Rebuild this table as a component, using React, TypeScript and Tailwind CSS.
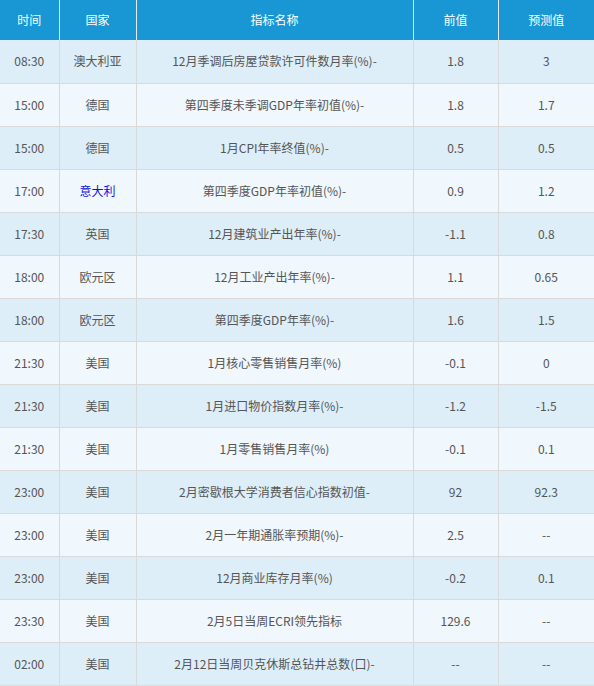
import React from 'react';

type Row = { time: string; country: string; name: string; prev: string; fcst: string; link?: boolean };

const rows: Row[] = [
  { time: '08:30', country: '澳大利亚', name: '12月季调后房屋贷款许可件数月率(%)-', prev: '1.8', fcst: '3' },
  { time: '15:00', country: '德国', name: '第四季度未季调GDP年率初值(%)-', prev: '1.8', fcst: '1.7' },
  { time: '15:00', country: '德国', name: '1月CPI年率终值(%)-', prev: '0.5', fcst: '0.5' },
  { time: '17:00', country: '意大利', name: '第四季度GDP年率初值(%)-', prev: '0.9', fcst: '1.2', link: true },
  { time: '17:30', country: '英国', name: '12月建筑业产出年率(%)-', prev: '-1.1', fcst: '0.8' },
  { time: '18:00', country: '欧元区', name: '12月工业产出年率(%)-', prev: '1.1', fcst: '0.65' },
  { time: '18:00', country: '欧元区', name: '第四季度GDP年率(%)-', prev: '1.6', fcst: '1.5' },
  { time: '21:30', country: '美国', name: '1月核心零售销售月率(%)', prev: '-0.1', fcst: '0' },
  { time: '21:30', country: '美国', name: '1月进口物价指数月率(%)-', prev: '-1.2', fcst: '-1.5' },
  { time: '21:30', country: '美国', name: '1月零售销售月率(%)', prev: '-0.1', fcst: '0.1' },
  { time: '23:00', country: '美国', name: '2月密歇根大学消费者信心指数初值-', prev: '92', fcst: '92.3' },
  { time: '23:00', country: '美国', name: '2月一年期通胀率预期(%)-', prev: '2.5', fcst: '--' },
  { time: '23:00', country: '美国', name: '12月商业库存月率(%)', prev: '-0.2', fcst: '0.1' },
  { time: '23:30', country: '美国', name: '2月5日当周ECRI领先指标', prev: '129.6', fcst: '--' },
  { time: '02:00', country: '美国', name: '2月12日当周贝克休斯总钻井总数(口)-', prev: '--', fcst: '--' },
];

const heads = ['时间', '国家', '指标名称', '前值', '预测值'];

const font = { fontFamily: '"Noto Sans CJK SC", "Liberation Sans", sans-serif' };

export default function App() {
  return (
    <div className="w-[594px] h-[686px] overflow-hidden bg-white" style={font}>
      <table className="w-[594px] table-fixed border-collapse text-[12px]">
        <colgroup>
          <col className="w-[59px]" />
          <col className="w-[77px]" />
          <col className="w-[277px]" />
          <col className="w-[85px]" />
          <col className="w-[96px]" />
        </colgroup>
        <thead>
          <tr className="h-[40px] bg-[#1897d4] text-white">
            {heads.map((h, i) => (
              <th
                key={h}
                className={`border-r border-[#e3e9ee] font-normal text-center ${i === heads.length - 1 ? 'border-r-0' : ''}`}
              >
                {h}
              </th>
            ))}
          </tr>
        </thead>
        <tbody>
          {rows.map((r, i) => (
            <tr key={i} className={`h-[43px] text-[#555] ${i % 2 === 0 ? 'bg-[#ddeef8]' : 'bg-[#f0f7fd]'}`}>
              <td className="border border-[#d9d9d9] border-l-0 border-t-0 text-center">{r.time}</td>
              <td className={`border border-[#d9d9d9] border-t-0 text-center ${r.link ? 'text-[#1010e0]' : ''}`}>{r.country}</td>
              <td className="border border-[#d9d9d9] border-t-0 text-center">{r.name}</td>
              <td className="border border-[#d9d9d9] border-t-0 text-center">{r.prev}</td>
              <td className="border border-[#d9d9d9] border-r-0 border-t-0 text-center">{r.fcst}</td>
            </tr>
          ))}
        </tbody>
      </table>
    </div>
  );
}
